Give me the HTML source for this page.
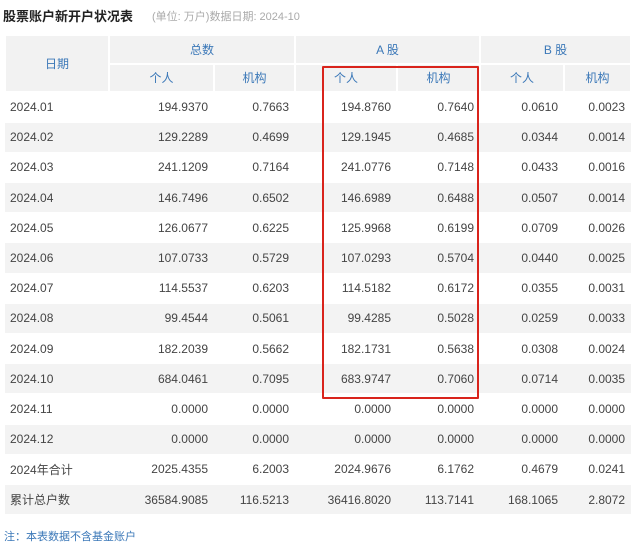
<!DOCTYPE html>
<html><head><meta charset="utf-8"><style>
body{margin:0;background:#fff;font-family:"Liberation Sans","Noto Sans CJK SC",sans-serif;width:640px;height:547px;overflow:hidden;position:relative}
.t{position:absolute;left:3px;top:6px;font-size:13px;font-weight:bold;color:#222}
.s{position:absolute;left:152px;top:8px;font-size:11px;color:#aaa}
table{position:absolute;left:4px;top:34px;border-collapse:collapse;table-layout:fixed;width:626px}
td,th{font-size:12px;padding:0 6px 0 0;text-align:right;color:#444;font-weight:normal;height:30.2px;box-sizing:border-box}
th{background:#f2f2f2;color:#3b78b8;text-align:center;border:2px solid #fff;padding:0;height:28.5px}
td:first-child{text-align:left;padding-left:5px}
tr.g td{background:#f3f3f3;border-top:1px solid #fff;border-bottom:1px solid #fff}
.box{position:absolute;left:322px;top:66px;width:153px;height:329px;border:2px solid #d9241c;border-radius:1px}
.n{position:absolute;left:4px;top:528px;font-size:11px;color:#3b78b8}
</style></head><body>
<div class="t">股票账户新开户状况表</div>
<div class="s">(单位: 万户)数据日期: 2024-10</div>
<table>
<colgroup><col style="width:104px"><col style="width:105px"><col style="width:81px"><col style="width:102px"><col style="width:83px"><col style="width:84px"><col style="width:67px"></colgroup>
<tr><th rowspan="2">日期</th><th colspan="2">总数</th><th colspan="2">A 股</th><th colspan="2">B 股</th></tr>
<tr><th>个人</th><th>机构</th><th>个人</th><th>机构</th><th>个人</th><th>机构</th></tr>
<tr><td>2024.01</td><td>194.9370</td><td>0.7663</td><td>194.8760</td><td>0.7640</td><td>0.0610</td><td>0.0023</td></tr>
<tr class="g"><td>2024.02</td><td>129.2289</td><td>0.4699</td><td>129.1945</td><td>0.4685</td><td>0.0344</td><td>0.0014</td></tr>
<tr><td>2024.03</td><td>241.1209</td><td>0.7164</td><td>241.0776</td><td>0.7148</td><td>0.0433</td><td>0.0016</td></tr>
<tr class="g"><td>2024.04</td><td>146.7496</td><td>0.6502</td><td>146.6989</td><td>0.6488</td><td>0.0507</td><td>0.0014</td></tr>
<tr><td>2024.05</td><td>126.0677</td><td>0.6225</td><td>125.9968</td><td>0.6199</td><td>0.0709</td><td>0.0026</td></tr>
<tr class="g"><td>2024.06</td><td>107.0733</td><td>0.5729</td><td>107.0293</td><td>0.5704</td><td>0.0440</td><td>0.0025</td></tr>
<tr><td>2024.07</td><td>114.5537</td><td>0.6203</td><td>114.5182</td><td>0.6172</td><td>0.0355</td><td>0.0031</td></tr>
<tr class="g"><td>2024.08</td><td>99.4544</td><td>0.5061</td><td>99.4285</td><td>0.5028</td><td>0.0259</td><td>0.0033</td></tr>
<tr><td>2024.09</td><td>182.2039</td><td>0.5662</td><td>182.1731</td><td>0.5638</td><td>0.0308</td><td>0.0024</td></tr>
<tr class="g"><td>2024.10</td><td>684.0461</td><td>0.7095</td><td>683.9747</td><td>0.7060</td><td>0.0714</td><td>0.0035</td></tr>
<tr><td>2024.11</td><td>0.0000</td><td>0.0000</td><td>0.0000</td><td>0.0000</td><td>0.0000</td><td>0.0000</td></tr>
<tr class="g"><td>2024.12</td><td>0.0000</td><td>0.0000</td><td>0.0000</td><td>0.0000</td><td>0.0000</td><td>0.0000</td></tr>
<tr><td>2024年合计</td><td>2025.4355</td><td>6.2003</td><td>2024.9676</td><td>6.1762</td><td>0.4679</td><td>0.0241</td></tr>
<tr class="g"><td>累计总户数</td><td>36584.9085</td><td>116.5213</td><td>36416.8020</td><td>113.7141</td><td>168.1065</td><td>2.8072</td></tr>
</table>
<div class="box"></div>
<div class="n">注：本表数据不含基金账户</div>
</body></html>
